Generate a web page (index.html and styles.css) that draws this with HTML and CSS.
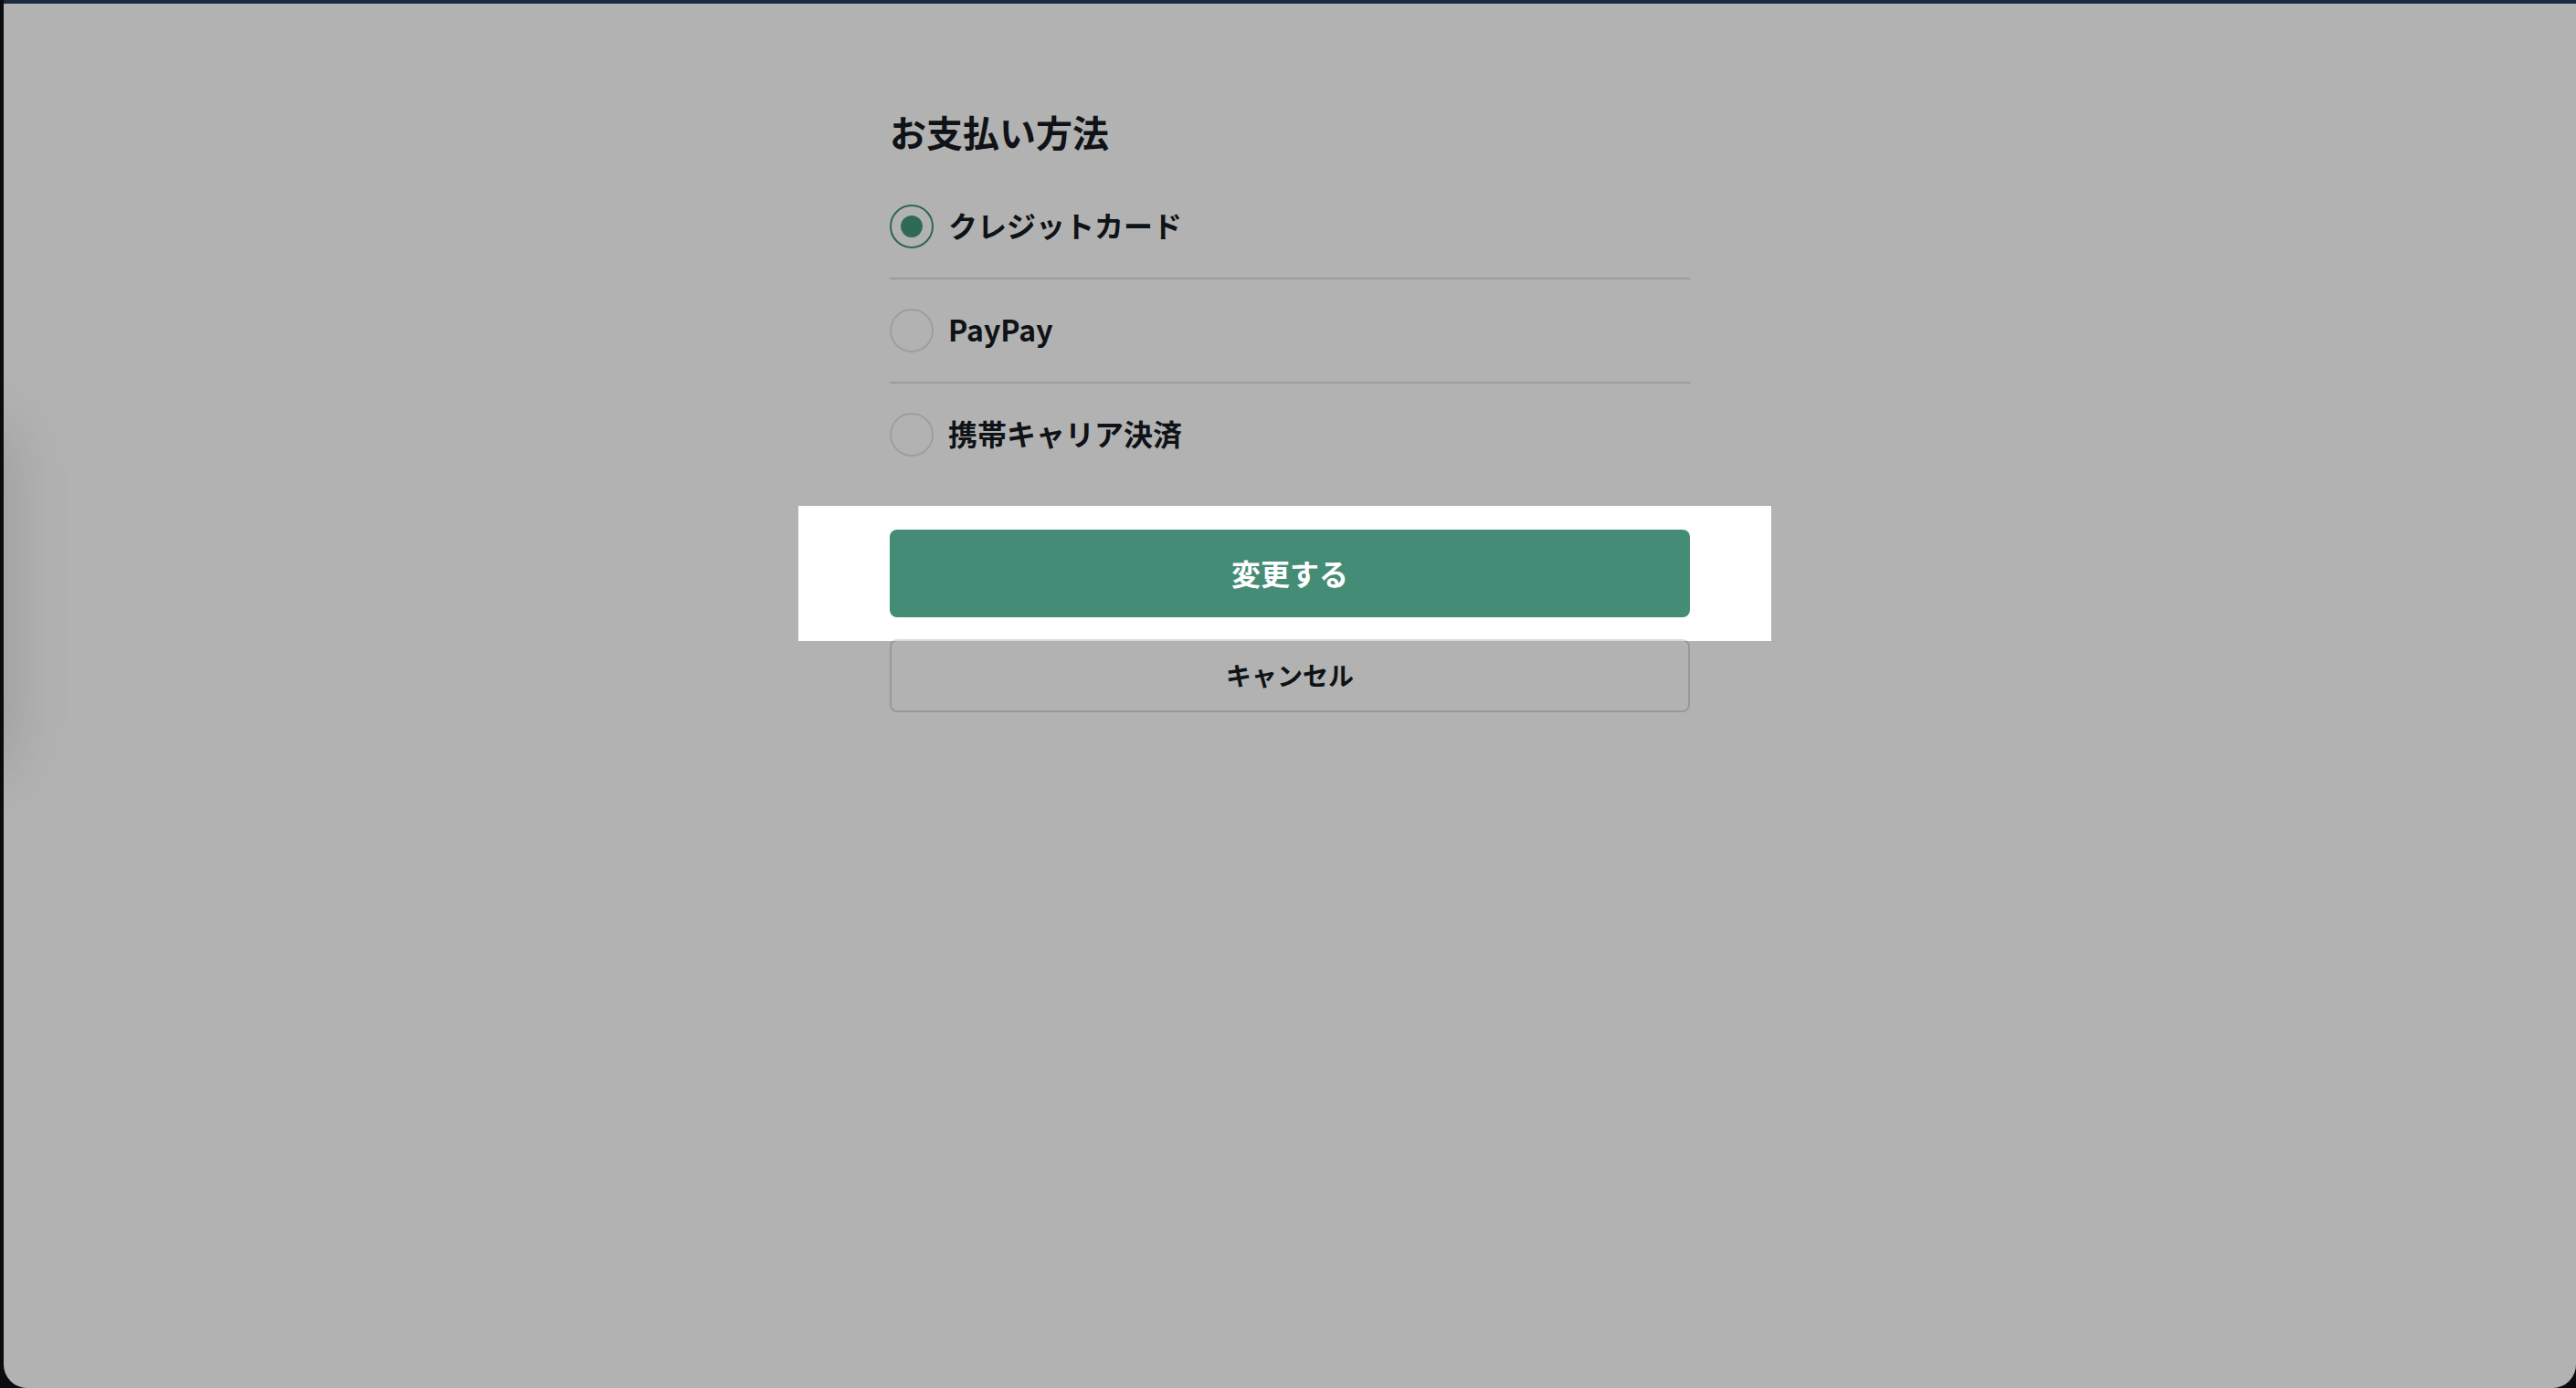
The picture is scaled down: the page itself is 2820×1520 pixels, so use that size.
FILE: index.html
```html
<!DOCTYPE html>
<html lang="ja">
  <head>
    <meta charset="utf-8">
    <title>お支払い方法</title>
    <link rel="stylesheet" href="styles.css">
  </head>
  <body>
    <div class="window">
      <div class="drawer-shadow"></div>
      <div class="sheet">
        <h2 class="sheet-title">お支払い方法</h2>
        <div class="methods">
          <label class="method">
            <input type="radio" name="payment" value="card" checked>
            <span>クレジットカード</span>
          </label>
          <label class="method">
            <input type="radio" name="payment" value="paypay">
            <span>PayPay</span>
          </label>
          <label class="method">
            <input type="radio" name="payment" value="carrier">
            <span>携帯キャリア決済</span>
          </label>
        </div>
        <div class="actions">
          <div class="submit-wrap">
            <button class="btn btn-primary">変更する</button>
            <div class="spotlight"></div>
          </div>
          <button class="btn btn-secondary">キャンセル</button>
        </div>
      </div>
    </div>
  </body>
</html>
```

FILE: styles.css
```css
html, body {
  margin: 0;
  height: 100%;
}
body {
  background: #0a0c10;
  font-family: "Noto Sans CJK JP", "Noto Sans", sans-serif;
  color: #161b21;
}
.window {
  position: relative;
  box-sizing: border-box;
  height: 1520px;
  margin-left: 4px;
  border-top: 4px solid #1b2a45;
  border-radius: 0 0 26px 26px;
  background: #ffffff;
  overflow: hidden;
}
.drawer-shadow {
  position: absolute;
  left: -60px;
  top: 470px;
  width: 60px;
  height: 360px;
  box-shadow: 0 0 70px 6px rgba(0, 0, 0, 0.14);
}
.sheet {
  width: 876px;
  margin: 0 auto;
  padding-top: 110px;
}
.sheet-title {
  margin: 0;
  font-size: 40px;
  line-height: 60px;
  font-weight: 700;
}
.methods {
  margin-top: 18px;
}
.method {
  display: flex;
  align-items: center;
  gap: 16px;
  height: 112px;
  font-size: 32px;
  font-weight: 700;
  border-bottom: 2px solid #dfdfdf;
  cursor: pointer;
}
.method span {
  padding-bottom: 4px;
}
.method:last-child {
  border-bottom: none;
}
.method input {
  appearance: none;
  -webkit-appearance: none;
  box-sizing: border-box;
  width: 48px;
  height: 48px;
  margin: 0;
  border: 2px solid #e2e2e2;
  border-radius: 50%;
  display: grid;
  place-items: center;
}
.method input:checked {
  border-color: #44917a;
}
.method input:checked::after {
  content: "";
  width: 24px;
  height: 24px;
  border-radius: 50%;
  background: #44997a;
}
.actions {
  display: flex;
  flex-direction: column;
  gap: 24px;
  margin-top: 48px;
}
.submit-wrap {
  position: relative;
}
.btn {
  box-sizing: border-box;
  display: block;
  width: 100%;
  border-radius: 8px;
  font-family: inherit;
  font-weight: 700;
  padding-bottom: 4px;
  cursor: pointer;
}
.btn-primary {
  height: 96px;
  border: none;
  background: #458c76;
  color: #ffffff;
  font-size: 32px;
}
.btn-secondary {
  height: 80px;
  border: 2px solid #dadada;
  background: #ffffff;
  color: #161b21;
  font-size: 28px;
}
.spotlight {
  position: absolute;
  top: -26px;
  bottom: -26px;
  left: -100px;
  right: -89px;
  box-shadow: 0 0 0 4000px rgba(0, 0, 0, 0.3);
  pointer-events: none;
  z-index: 10;
}
```
